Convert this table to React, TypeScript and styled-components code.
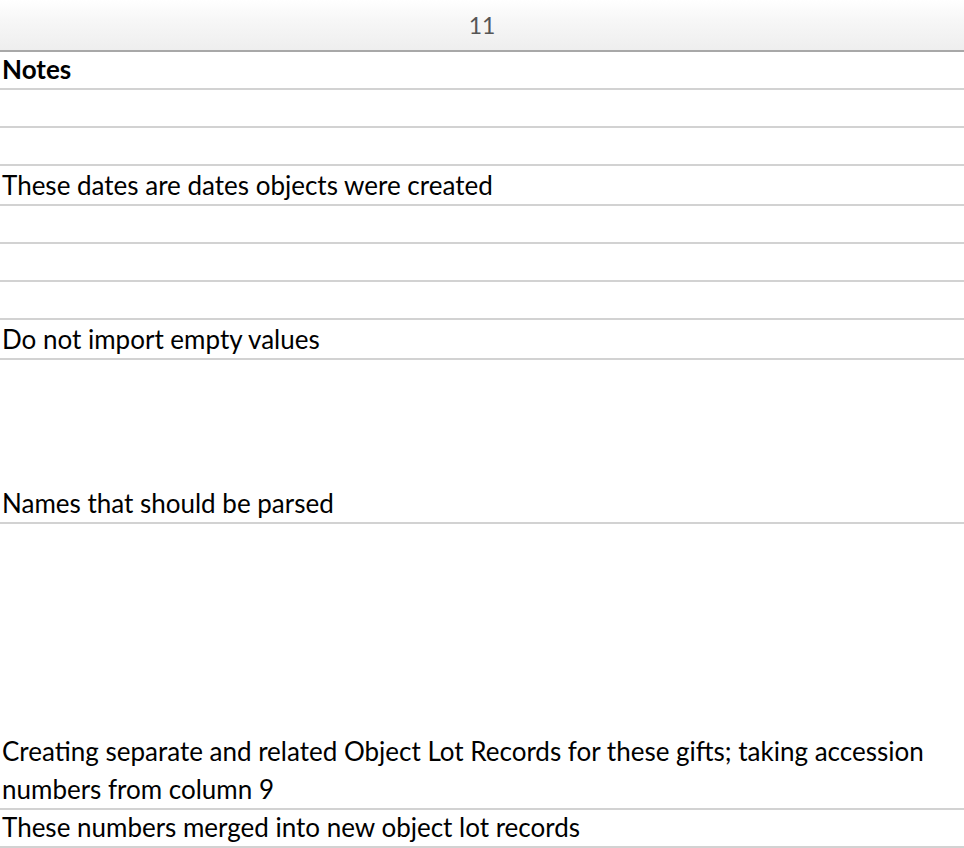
import React from "react";
import styled, { createGlobalStyle } from "styled-components";

const Global = createGlobalStyle`
  html, body { margin: 0; padding: 0; background: #ffffff; }
  body { font-family: Lato, "Open Sans", Arial, sans-serif; }
`;

const Sheet = styled.div`
  width: 964px;
  display: flex;
  flex-direction: column;
  background: #ffffff;
`;

const ColumnHeader = styled.div`
  height: 50px;
  display: flex;
  align-items: center;
  justify-content: center;
  background: linear-gradient(to bottom, #ffffff 0%, #f7f7f7 40%, #eeeeee 100%);
  border-bottom: 2px solid #a8a8a8;
  color: #555555;
  font-size: 23px;
  font-family: Lato, sans-serif;
  box-sizing: content-box;
`;

const Row = styled.div<{ $h: number; $pb: number }>`
  height: ${(p) => p.$h}px;
  display: flex;
  flex-direction: column;
  justify-content: flex-end;
  padding: 0 0 ${(p) => p.$pb}px 2px;
  box-sizing: border-box;
  border-bottom: 2px solid #d2d2d2;
`;

const Text = styled.div<{ $bold?: boolean }>`
  font-family: Lato, "Open Sans", sans-serif;
  font-size: 26px;
  line-height: 38px;
  font-weight: ${(p) => (p.$bold ? 700 : 400)};
  color: #000000;
  white-space: pre-wrap;
`;

type RowData = { h: number; pb?: number; text?: string[]; bold?: boolean };

const rows: RowData[] = [
  { h: 38, pb: 0, text: ["Notes"], bold: true },
  { h: 38 },
  { h: 38 },
  { h: 40, pb: 0, text: ["These dates are dates objects were created"] },
  { h: 38 },
  { h: 38 },
  { h: 38 },
  { h: 40, pb: 0, text: ["Do not import empty values"] },
  { h: 164, pb: 0, text: ["Names that should be parsed"] },
  {
    h: 286,
    pb: 0,
    text: [
      "Creating separate and related Object Lot Records for these gifts; taking accession",
      "numbers from column 9",
    ],
  },
  { h: 38, pb: 0, text: ["These numbers merged into new object lot records"] },
];

export default function App() {
  return (
    <>
      <Global />
      <Sheet>
        <ColumnHeader>11</ColumnHeader>
        {rows.map((r, i) => (
          <Row key={i} $h={r.h} $pb={r.pb ?? 0}>
            {r.text?.map((t, j) => (
              <Text key={j} $bold={r.bold}>
                {t}
              </Text>
            ))}
          </Row>
        ))}
      </Sheet>
    </>
  );
}
